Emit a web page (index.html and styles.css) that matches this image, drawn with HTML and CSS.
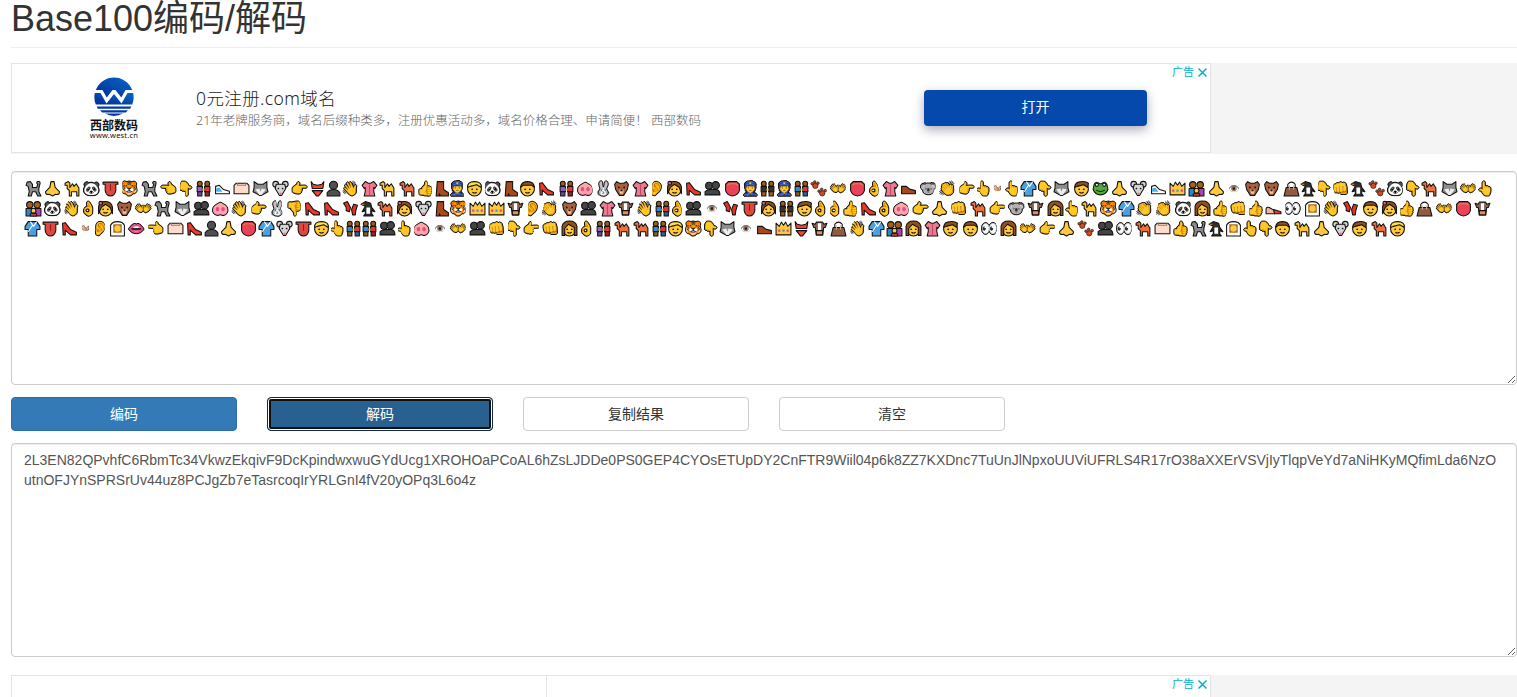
FILE: index.html
```
<!DOCTYPE html>
<html lang="zh">
<head>
<meta charset="utf-8">
<title>Base100编码/解码</title>
<link rel="stylesheet" href="styles.css">
</head>
<body>
<main class="page">
  <h1 class="title">Base100编码/解码</h1>

  <section class="ad-strip">
    <div class="ad">
      <div class="brand">
        <svg width="40" height="40" viewBox="0 0 40 40">
          <defs><linearGradient id="sea" x1="1" y1="0" x2="0" y2="1"><stop offset="0" stop-color="#0668c6"/><stop offset="1" stop-color="#002c96"/></linearGradient></defs>
          <path d="M1.8 13A19.5 19.5 0 0 1 38.2 13H31.5L27.3 20.5L21.5 13H18.5L12.7 20.5L8.500 13Z" fill="url(#sea)"/>
          <path d="M.8 16H6.500L12.500 26.500L20 17L27.500 26.500L33.500 16H39.200A19.500 19.500 0 0 1 38.200 27.500H1.800A19.500 19.500 0 0 1 .8 16Z" fill="url(#sea)"/>
          <path d="M2.700 29.500H37.300L36.200 31.700H3.800ZM6 33.300H34L31.800 35.400H8.200ZM11 36.600H29A19 19 0 0 1 11 36.600Z" fill="#0337a2"/>
        </svg>
        <b class="brand-name">西部数码</b>
        <span class="brand-url">www.west.cn</span>
      </div>
      <div class="ad-copy">
        <div class="ad-title">0元注册.com域名</div>
        <div class="ad-desc">21年老牌服务商，域名后缀种类多，注册优惠活动多，域名价格合理、申请简便！ 西部数码</div>
      </div>
      <div class="ad-open">打开</div>
      <div class="ad-tag">广告<svg width="11" height="11" viewBox="0 0 11 11"><path d="M1.500 1.500L9.500 9.500M9.500 1.500L1.500 9.500" stroke="#00aecd" stroke-width="1.500"/></svg></div>
    </div>
  </section>

  <div class="field" id="source"></div>

  <div class="actions">
    <button class="btn primary">编码</button>
    <button class="btn primary focused">解码</button>
    <button class="btn">复制结果</button>
    <button class="btn">清空</button>
  </div>

  <div class="field">2L3EN82QPvhfC6RbmTc34VkwzEkqivF9DcKpindwxwuGYdUcg1XROHOaPCoAL6hZsLJDDe0PS0GEP4CYOsETUpDY2CnFTR9Wiil04p6k8ZZ7KXDnc7TuUnJlNpxoUUViUFRLS4R17rO38aXXErVSVjIyTlqpVeYd7aNiHKyMQfimLda6NzO<br>utnOFJYnSPRSrUv44uz8PCJgZb7eTasrcoqIrYRLGnI4fV20yOPq3L6o4z</div>

  <section class="ad-strip second">
    <div class="ad">
      <div class="ad-cell"></div>
      <div class="ad-tag">广告<svg width="11" height="11" viewBox="0 0 11 11"><path d="M1.500 1.500L9.500 9.500M9.500 1.500L1.500 9.500" stroke="#00aecd" stroke-width="1.500"/></svg></div>
    </div>
  </section>
</main>
<script src="script.js"></script>
</body>
</html>
```
FILE: script.js
```
// Base100 maps every byte b to the code point U+1F3F7 + b.
const lines = [
  ["2L3EN82QPvhfC6RbmTc34VkwzEkqivF9DcKpindwxwuGYdUcg1XROHOaPCoAL6hZsLJDDe0PS0GEP4CYO", 1469],
  ["sETUpDY2CnFTR9Wiil04p6k8ZZ7KXDnc7TuUnJlNpxoUUViUFRLS4R17rO38aXXErVSVjIyTlqpVeYd7", 1469],
  ["aNiHKyMQfimLda6NzOutnOFJYnSPRSrUv44uz8PCJgZb7eTasrcoqIrYRLGnI4fV20yOPq3L6o4z", 1383]
];
const narrow = { P: 15, O: 15, U: 14, m: 15, K: 15, k: 15, H: 13, 0: 15.5, 9: 17, W: 17, V: 16.5, b: 16.5, z: 17, w: 17.5, x: 16.5, u: 15.5, a: 17, J: 17, c: 18, t: 17 };

const face = hair => `<circle cx="8" cy="8.500" r="6.500" fill="#ffc83d"/>${hair}<g stroke="none" fill="#111"><circle cx="5.800" cy="8.700" r=".8"/><circle cx="10.200" cy="8.700" r=".8"/></g><path d="M6 11.500Q8 13 10 11.500" fill="none"/>`;
const pair = (a, b, legsA, legsB) => `<g fill="${a}"><path d="M2 6H7V11H2Z"/></g><g fill="${b}"><path d="M9 6H14V11H9Z"/></g><path fill="${legsA}" d="M2.500 11H6.500V15H2.500Z"/><path fill="${legsB}" d="M9.500 11H13.500V15H9.500Z"/><circle cx="4.500" cy="3.500" r="2.300" fill="#9a5b1c"/><circle cx="11.500" cy="3.500" r="2.300" fill="#9a5b1c"/><path d="M7 9H9" stroke="#ffc83d" stroke-width="2"/>`;
const camel = color => `<path fill="${color}" d="M1 3L4 1.500L5.500 3V7L8 3.500L9.500 6L11.500 3.500L14 7.500V15H12V11H7V15H5V10L3 8V5H1Z"/>`;
const drawn = {
  2: `<path fill="#8b8b8b" d="M1 5L2 2L5 1.500L7 4V7H11L12 4Q10 2.500 12 1.500Q15 1 14 4L13 8V11L15 15H12L10 11H7L6 15H3L4 11L3 6Z"/>`,
  3: camel("#ffc52b"),
  4: camel("#f0703a"),
  L: `<path fill="#ffc83d" d="M6.500 1.500H9.500L10.500 7L14.500 11Q15 14 11 13.500L8 15L5 13.500Q1 14 1.500 11L5.500 7Z"/>`,
  N: `<path fill="#e0483e" d="M1 2H15V4H13V10Q12 15 8 15T3 10V4H1Z"/><path d="M8 4V10" stroke="#8d1d20"/>`,
  a: `<path fill="#4aa0e2" d="M4 1.500H12L15 6V9H12V15H4V9H1V6Z"/><path d="M6 1.500L9 6L12 1.500M8 5L4 11" stroke="#fff" fill="none"/>`,
  c: `<path fill="#ee7a92" d="M4 1.500L7 3H9L12 1.500L15 5L13 8L12 7V11L13 15H3L4 11V7L3 8L1 5Z"/><path d="M8 4V14" stroke="#c14c66"/>`,
  d: `<path fill="#ea4259" d="M4 1.500H12L14.500 4V10Q13 14.500 8 15Q3 14.500 1.500 10V4Z"/><path d="M3 5L5 3.500H11L13 5" stroke="#c89b25" fill="none"/>`,
  e: `<path d="M4.500 8V4Q8 0 11.500 4V8" fill="none"/><path fill="#8d5c42" d="M3 7H13L15 15H1Z"/><path d="M6 9V5M10 9V5" stroke="#d9b39c"/>`,
  f: `<path fill="#ffdccb" d="M1 5L3 3H13L15 5V13H1Z"/><path d="M4 3V5H12V3" fill="none" stroke="#a8785f"/>`,
  h: `<path fill="#fff" d="M1.500 6L5 5L9 9L14.500 10.500V13H1.500Z"/><path fill="#48b3e7" stroke="none" d="M2 8L5 7L8 11H2Z"/>`,
  g: `<path fill="#a9481f" d="M1.500 6H6L9 8.500L14.500 10V13H1.500Z"/>`,
  i: `<path fill="#ef3828" d="M1.500 3L4 2.500L9 9L14.500 11.500V14H9L4 9.500V14H2Z"/>`,
  j: `<path fill="#f3b6a2" d="M1 9Q1 6 4 7L9 10V13H1Z"/><path fill="#ef3828" d="M8 9L15 11V13H9Z"/>`,
  k: `<path fill="#a84a1d" d="M4 1.500H10V9L14.500 12V15H7L6 13V15H3Z"/>`,
  l: `<g fill="#e8311f"><path d="M1.500 3L5 1.500L8 7L7 11L4 10L4 7Z"/><path d="M14.500 5L11 4L9 9L10 14L12.500 14L13 10Z"/></g>`,
  m: `<circle cx="8" cy="5" r="3.800" fill="#505050"/><path fill="#505050" d="M2 15V12Q4 9 8 9T14 12V15Z"/>`,
  n: `<g fill="#444"><circle cx="4.800" cy="5.500" r="3.300"/><circle cx="11" cy="5" r="3.500"/><path d="M1 14V11Q3 9 6 9H12Q15 10 15 14Z"/></g>`,
  s: `<path fill="#2f86d0" d="M1 8H8V15H1Z"/><path fill="#b23fb8" d="M8 8H15V15H8Z"/><g fill="#a5611c"><circle cx="4.500" cy="4.500" r="3"/><circle cx="11.500" cy="4.500" r="3"/></g><circle cx="8" cy="10" r="2.300" fill="#ffc83d"/><path fill="#ef5a28" d="M5 13H11V15H5Z"/>`,
  t: pair("#2d8bd8", "#e53535", "#8a6215", "#a0231f"),
  u: pair("#2d8bd8", "#e53535", "#8a6215", "#29679d"),
  v: pair("#8d65c6", "#e53535", "#6e4a9d", "#a0231f"),
  x: pair("#333", "#333", "#a5611c", "#a5611c"),
  7: `<path fill="#8a6250" d="M1 3L4 4L5 2H11L12 4L15 3L13.500 7H12L11 14H5L4 7H2.500Z"/><path fill="#fff" stroke="none" d="M6.500 3H9.500V10H6.500Z"/><path fill="#f28a55" d="M5 10H11V14H5Z"/>`,
  6: `<g fill="#d4d4d4"><circle cx="3.500" cy="4" r="2.700"/><circle cx="12.500" cy="4" r="2.700"/><path d="M4 4H12L13 8L9 14.500H7L3 8Z"/></g><g fill="#111" stroke="none"><circle cx="6" cy="8" r=".8"/><circle cx="10" cy="8" r=".8"/></g><path fill="#f26b7c" stroke="none" d="M7 12H9V14H7Z"/>`,
  A: `<path fill="#4cad38" d="M2 4Q4 .5 7 3.500H9Q12 .5 14 4L15 9Q13 14 8 14T1 9Z"/><g fill="#fff"><circle cx="4.500" cy="4.500" r="1.500"/><circle cx="11.500" cy="4.500" r="1.500"/></g><path d="M4 9.500Q8 12 12 9.500" fill="none"/>`,
  C: `<path fill="#8c8c8c" d="M2 1.500L5.500 4H10.500L14 1.500V7L15 11L9 14.500H7L1 11L2 7Z"/><path fill="#eee" stroke="none" d="M3 9L7 8L8 11L9 8L13 9L9 14H7Z"/>`,
  D: `<path fill="#a8603c" d="M1.500 4L3.500 1.500L6 3H10L12.500 1.500L14.500 4L13.500 9L10 14.500H6L2.500 9Z"/><path fill="#f2c6a5" stroke="none" d="M6 9H10L9.500 13H6.500Z"/><g stroke="none" fill="#111"><circle cx="5.500" cy="7" r=".8"/><circle cx="10.500" cy="7" r=".8"/><path d="M7 9H9V10.500H7Z"/></g>`,
  G: `<g fill="#d8471c" stroke-width=".6"><circle cx="5" cy="5.500" r="2.500"/><circle cx="2" cy="3.500" r="1.200"/><circle cx="4.500" cy="1.800" r="1.200"/><circle cx="7.500" cy="3" r="1.200"/><circle cx="11.500" cy="12.500" r="2.500"/><circle cx="8.500" cy="10.500" r="1.200"/><circle cx="11" cy="8.800" r="1.200"/><circle cx="14.300" cy="10" r="1.200"/></g>`,
  Z: `<path fill="#ffc83d" d="M1 3L4 6L6 2L8 5L10 2L12 6L15 3V14H1Z"/><g stroke="none"><path fill="#e23ca1" d="M3 9H5V11H3ZM11 9H13V11H11Z"/><path fill="#2d9edb" d="M7 9H9V11H7Z"/></g>`,
  0: `<path fill="#303030" d="M1 4L5 1.500L10 3L11 7L14 11L11 10V13L12.500 15H3.500L5 13V10L2 11L5 6Z"/><path fill="#fff" stroke="none" d="M6 7H9.500V13H6Z"/><path stroke="#ff8a20" d="M1.500 4H4"/>`,
  b: `<path fill="#ef4436" d="M2 1.500L4 4L8 5L12 4L14 1.500L13 8H3ZM3 10H13L9 15H7Z"/>`,
  o: face(`<path fill="#91511d" d="M1.500 7Q2 1.500 8 1.500Q12 1 14.500 3L14 7L10 4.500L4 6Z"/>`),
  p: face(`<path fill="#91511d" d="M1.500 13V7Q2 1 8 1.500T14.500 7V13L12.500 7L8 4L4 7Z"/><circle cx="3.500" cy="3" r="1.700" fill="#ed5d92"/>`),
  q: face(`<path fill="#91511d" d="M1.500 7Q2 1.500 8 1.500T14.500 7L12 5H4Z"/>`),
  r: face(`<path fill="#91511d" d="M1 14.500V6Q2 1 8 1T15 6V14.500H12.500V7L7 4L3.500 8V14.500Z"/>`),
  z: face(`<path fill="#ffe338" d="M1.500 7Q1 1.500 8 1.500T14.500 7L10 4.500L4 6Z"/>`),
  y: `<path fill="#fff" d="M1.500 15V5Q3 1.500 8 1.500T14.500 5V15Z"/><path fill="#a96c24" stroke="none" d="M4 4H12V12H4Z"/><circle cx="8" cy="8" r="3" fill="#ffc83d" stroke="none"/>`
};

const source = document.getElementById("source");
for (const [text, width] of lines) {
  const row = document.createElement("div");
  row.className = "emoji-row";
  row.style.width = width + "px";
  for (const ch of text) {
    const cell = document.createElement("span");
    cell.className = "emoji" + (ch === "H" ? " tiny" : ch === "J" ? " small" : "");
    cell.style.width = (narrow[ch] || 19.2) + "px";
    const glyph = String.fromCodePoint(0x1F3F7 + ch.charCodeAt(0));
    if (drawn[ch]) {
      cell.innerHTML = `<svg class="pic" viewBox="0 0 16 16" role="img" aria-label="${glyph}">${drawn[ch]}</svg>`;
    } else {
      cell.textContent = glyph;
    }
    row.append(cell);
  }
  source.append(row);
}
```
FILE: styles.css
```
* { box-sizing: border-box; }
html, body { height: 100%; overflow: hidden; }
body { margin: 0; background: #fff; color: #333; font: 14px/20px "Liberation Sans", "Noto Sans CJK SC", sans-serif; }
.page { height: 697px; padding-left: 11px; overflow: hidden; }
.title { margin: 0 0 15px; height: 48px; border-bottom: 1px solid #eee; font-size: 36px; font-weight: 400; line-height: 37px; }
.ad-strip { height: 91px; background: #f4f4f4; margin-bottom: 17px; }
.ad { position: relative; display: flex; width: 1200px; height: 90px; background: #fff; border: 1px solid #e4e4e4; }
.brand { width: 60px; margin-left: 72px; padding-top: 13px; display: flex; flex-direction: column; align-items: center; color: #111; }
.brand svg { flex: none; }
.brand-name { font: 700 12px/15px "Noto Sans CJK SC", sans-serif; white-space: nowrap; }
.brand-url { font: 7.5px/6px "Noto Sans", sans-serif; letter-spacing: .2px; }
.ad-copy { margin-left: 52px; width: 728px; padding-top: 22px; font-family: "Noto Sans", "Noto Sans CJK SC", sans-serif; white-space: nowrap; }
.ad-title { font-size: 17.5px; line-height: 25px; letter-spacing: .4px; color: #222; font-weight: 300; }
.ad-desc { font-size: 12.5px; line-height: 20px; color: #666; font-weight: 300; }
.ad-open { width: 223px; height: 36px; margin-top: 26px; border-radius: 4px; background: #0449ab; color: #fff; text-align: center; font-size: 14px; line-height: 34px; box-shadow: 0 4px 11px rgba(20, 10, 60, .34); }
.ad-tag { position: absolute; right: 2px; top: 0; display: flex; align-items: center; gap: 3px; font-size: 11px; line-height: 16px; color: #00aecd; }
.field { height: 214px; padding: 6px 12px; border: 1px solid #ccc; border-radius: 4px; box-shadow: inset 0 1px 1px rgba(0, 0, 0, .075); color: #555; resize: both; overflow: hidden; white-space: nowrap; }
.emoji-row { display: flex; justify-content: space-between; height: 20px; }
.emoji { display: flex; justify-content: center; font: 13.3px/21px "Noto Color Emoji", sans-serif; text-shadow: .7px 0 #111, -.7px 0 #111, 0 .7px #111, 0 -.7px #111; }
.pic { flex: none; width: 17px; height: 17px; margin-top: 2px; stroke: #111; stroke-width: 1; stroke-linejoin: round; }
.tiny { font-size: 7px; text-shadow: none; }
.small { font-size: 9.5px; text-shadow: none; }
.actions { display: flex; gap: 30px; margin: 12px 0; }
.btn { width: 226px; height: 34px; padding: 0; border: 1px solid #ccc; border-radius: 4px; background: #fff; color: #333; font: 14px/20px "Liberation Sans", "Noto Sans CJK SC", sans-serif; }
.primary { background: #337ab7; border-color: #2e6da4; color: #fff; }
.focused { background: #286090; border-color: #122b40; box-shadow: inset 0 0 0 1px #fff, inset 0 0 0 3px #101010; }
.second { margin: 18px 0 0; }
.ad-cell { width: 535px; border-right: 1px solid #e4e4e4; }
```
